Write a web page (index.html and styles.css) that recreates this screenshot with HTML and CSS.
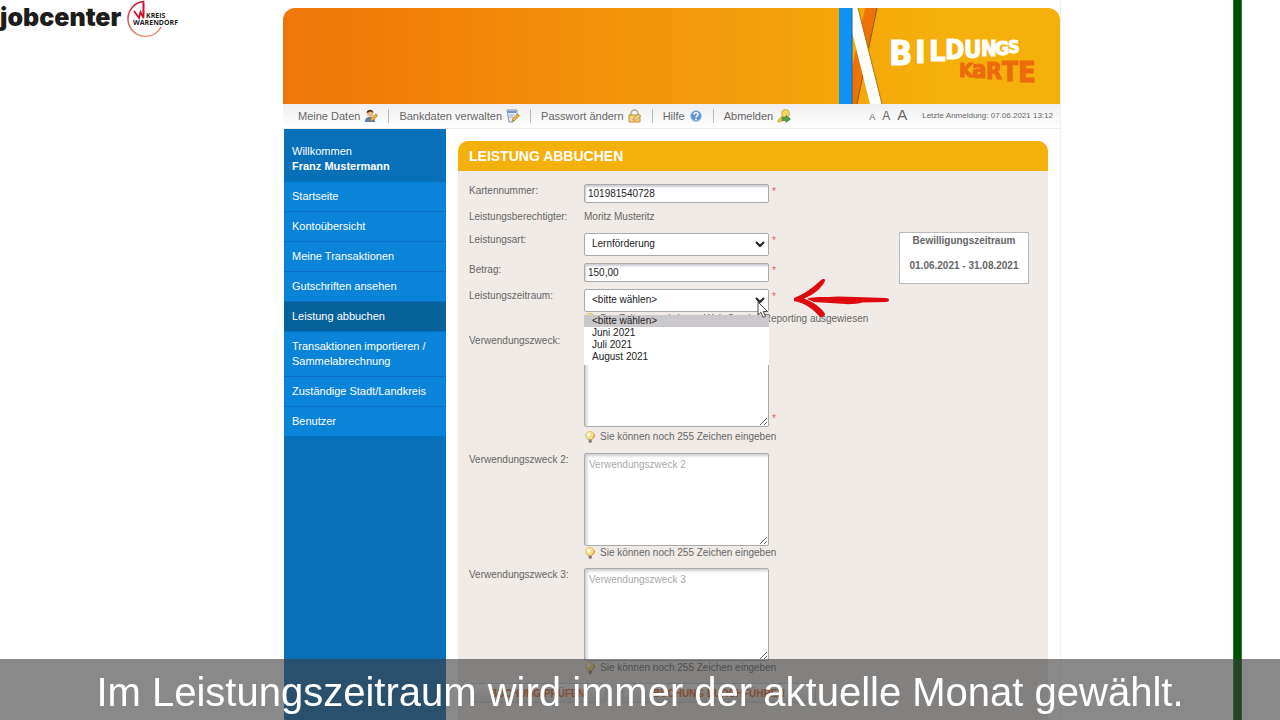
FILE: index.html
```html
<!DOCTYPE html>
<html lang="de">
<head>
  <meta charset="UTF-8">
  <meta name="viewport" content="width=device-width, initial-scale=1.0">
  <title>Leistung abbuchen</title>
  <link rel="stylesheet" href="styles.css">
</head>
<body>
  <!-- Shared icon -->
  <svg class="defs" width="0" height="0">
    <symbol id="bulb" viewBox="0 0 12 12">
      <circle cx="6" cy="4.6" r="4.3" fill="#f7dd86" stroke="#cfa84c" stroke-width=".6"/>
      <circle cx="4.8" cy="3.6" r="2" fill="#fffbe0"/>
      <path d="M4.5 8.6h3.4v2.2L6.8 11.9H5.5L4.5 10.8z" fill="#8d8577"/>
      <path d="M8.5 7.6l1.7-2.3.2-2" stroke="#c48a34" fill="none"/>
    </symbol>
  </svg>

  <div class="stage">
    <div class="brand">
      <svg width="184" height="40" viewBox="0 0 184 40">
        <defs>
          <linearGradient id="ring" x1="0" y1="0" x2="0" y2="1">
            <stop offset="0" stop-color="#c4102c"/>
            <stop offset="1" stop-color="#e39a80"/>
          </linearGradient>
        </defs>
        <text class="brand-name" x="0" y="26">jobcenter</text>
        <path d="M143.5 14V1.5A17.5 17.5 0 1 0 161 27" fill="none" stroke="url(#ring)" stroke-width="1.5"/>
        <path d="M134 11l5 7 1.5-6 3 6V3" fill="none" stroke="#d0102b" stroke-width="1.8"/>
        <text class="brand-sub" x="146" y="18">KREIS</text>
        <text class="brand-sub" x="133" y="25">WARENDORF</text>
      </svg>
    </div>

    <div class="portal">
      <header class="banner">
        <svg width="221" height="96" viewBox="0 0 221 96">
          <path d="M0 0h13v96H0z" fill="#0d92f5"/>
          <path d="M26 0h12L18 96H13V60z" fill="#ee7205"/>
          <path d="M38 0L18 96" stroke="#8a5a10" fill="none"/>
          <path d="M13 0h6l24 96H31L13 24z" fill="#fff"/>
          <path d="M19 0l24 96" stroke="#a87512" fill="none"/>
          <path d="M13 0v96" stroke="#27658c" fill="none"/>
          <text class="logo-top"><tspan x="50" y="57" font-size="34">B</tspan><tspan x="76" y="55" font-size="32">I</tspan><tspan x="90" y="53" font-size="29">L</tspan><tspan x="106" y="51" font-size="26">D</tspan><tspan x="125" y="50" font-size="24">U</tspan><tspan x="142" y="48" font-size="21">N</tspan><tspan x="156" y="47" font-size="19">G</tspan><tspan x="169" y="45" font-size="18">S</tspan></text>
          <text class="logo-bottom"><tspan x="120" y="69" font-size="20">K</tspan><tspan x="133" y="70" font-size="24">a</tspan><tspan x="147" y="71" font-size="23">R</tspan><tspan x="163" y="73" font-size="26">T</tspan><tspan x="179" y="74" font-size="29">E</tspan></text>
        </svg>
      </header>

      <nav class="topnav">
        <a href="#">Meine Daten
          <svg width="14" height="14" viewBox="0 0 14 14"><path d="M1 13c0-4 2-5 5-5s5 2 5 5z" fill="#5d7fa8"/><circle cx="6" cy="4.5" r="3.2" fill="#e9b77b"/><path d="M2.5 4C3 0 9-.5 9.5 4L7 2.5z" fill="#5b3213"/><path d="M6 12l1-3 5-4 1.5 2-5 4.5z" fill="#f0b73c" stroke="#9a6a1c" stroke-width=".6"/></svg>
        </a>
        <a href="#">Bankdaten verwalten
          <svg width="14" height="14" viewBox="0 0 14 14"><path d="M1 1h10v7l-4 5H3z" fill="#e8eef7" stroke="#7e91ad"/><path d="M2 2h8v2H2z" fill="#6a95d0"/><path d="M3 6h5M3 8h4" stroke="#9fb0c6"/><path d="M6 12l1-3 5-4 1.5 2-5 4.5z" fill="#f0b73c" stroke="#9a6a1c" stroke-width=".6"/></svg>
        </a>
        <a href="#">Passwort ändern
          <svg width="14" height="14" viewBox="0 0 14 14"><path d="M3 7V4.5a3.5 3.5 0 0 1 7 0V7" fill="none" stroke="#b1a68f" stroke-width="1.5"/><path d="M1 6h11v7H1z" fill="#f5d37a" stroke="#bf9035"/><path d="M5 11l1-2 5-4 1.5 2-5 4z" fill="#f8e0a0" stroke="#9a6a1c" stroke-width=".6"/></svg>
        </a>
        <a href="#">Hilfe
          <svg width="14" height="14" viewBox="0 0 14 14"><circle cx="7" cy="7" r="5.5" fill="#5f93cf" stroke="#b9cde4"/><path d="M5 5.5c0-2.500 4-2.500 4 0C9 7 7 7 7 8.500" fill="none" stroke="#fff" stroke-width="1.5"/><circle cx="7" cy="10.5" r=".9" fill="#fff"/></svg>
        </a>
        <a href="#">Abmelden
          <svg width="14" height="14" viewBox="0 0 14 14"><circle cx="8.5" cy="4.5" r="4" fill="#f2d667" stroke="#bf9c36" stroke-width=".7"/><path d="M5.5 6.5L1 11v2h3l3-4z" fill="#edc850" stroke="#bf9c36" stroke-width=".6"/><path d="M5 8.5h4V6.500l4.500 3.500L9 13.500v-2H5z" fill="#55a63a" stroke="#2f6d22" stroke-width=".6"/></svg>
        </a>
        <div class="sizes"><a class="size-s" href="#">A</a><a class="size-m" href="#">A</a><a class="size-l" href="#">A</a></div>
        <span class="last-login">Letzte Anmeldung: 07.06.2021 13:12</span>
      </nav>

      <div class="columns">
        <aside class="sidebar">
          <p class="welcome">Willkommen<br><strong>Franz Mustermann</strong></p>
          <ul class="menu">
            <li><a href="#">Startseite</a></li>
            <li><a href="#">Kontoübersicht</a></li>
            <li><a href="#">Meine Transaktionen</a></li>
            <li><a href="#">Gutschriften ansehen</a></li>
            <li><a class="active" href="#">Leistung abbuchen</a></li>
            <li><a href="#">Transaktionen importieren / Sammelabrechnung</a></li>
            <li><a href="#">Zuständige Stadt/Landkreis</a></li>
            <li><a href="#">Benutzer</a></li>
          </ul>
        </aside>

        <main class="panel">
          <h1>LEISTUNG ABBUCHEN</h1>
          <div class="panel-body">
            <form>
              <div class="row">
                <label for="karte">Kartennummer:</label>
                <div class="field"><input type="text" id="karte" value="101981540728"><span class="req">*</span></div>
              </div>
              <div class="row plain">
                <span class="label">Leistungsberechtigter:</span>
                <div>Moritz Musteritz</div>
              </div>
              <div class="row">
                <label for="art">Leistungsart:</label>
                <div class="field"><select id="art"><option>Lernförderung</option></select><span class="req">*</span></div>
              </div>
              <div class="row">
                <label for="betrag">Betrag:</label>
                <div class="field"><input type="text" id="betrag" value="150,00"><span class="req">*</span></div>
              </div>
              <div class="row hinted">
                <label for="zeitraum">Leistungszeitraum:</label>
                <div class="field open">
                  <select id="zeitraum">
                    <option>&lt;bitte wählen&gt;</option>
                    <option>Juni 2021</option>
                    <option>Juli 2021</option>
                    <option>August 2021</option>
                  </select><span class="req">*</span>
                  <p class="hint"><svg width="12" height="12"><use href="#bulb"/></svg>Der Zeitraum wird vom Web-Service Reporting ausgewiesen</p>
                  <ul class="options">
                    <li class="current">&lt;bitte wählen&gt;</li>
                    <li>Juni 2021</li>
                    <li>Juli 2021</li>
                    <li>August 2021</li>
                  </ul>
                  <svg class="cursor" width="12" height="18" viewBox="0 0 12 18"><path d="M1 1v13l3-2.6 2.2 5 2.3-1-2.2-4.8H10.5z" fill="#fff" stroke="#444"/></svg>
                  <svg class="arrow" width="98" height="42" viewBox="0 0 98 42"><path d="M1 20C12 16 20 9 27 3c3-3 6-2 5 0-4 8-12 14-21 17.500C20 24 29 30 32 36c0 3-4 4-6 2C20 31 12 25 1 23z" fill="#dd0a10"/><path d="M14 21c4-2 12-2 22-2l9-.5 18 .5 30 1c4 0 4 4 0 4l-24 .5c-5 2-18 2-24 1l-24-1.500z" fill="#dd0a10"/></svg>
                </div>
              </div>
              <div class="row hinted">
                <label for="zweck1">Verwendungszweck:</label>
                <div class="field required-area"><textarea id="zweck1"></textarea><span class="req">*</span>
                  <p class="hint"><svg width="12" height="12"><use href="#bulb"/></svg>Sie können noch 255 Zeichen eingeben</p>
                </div>
              </div>
              <div class="row hinted">
                <label for="zweck2">Verwendungszweck 2:</label>
                <div class="field"><textarea id="zweck2" placeholder="Verwendungszweck 2"></textarea>
                  <p class="hint"><svg width="12" height="12"><use href="#bulb"/></svg>Sie können noch 255 Zeichen eingeben</p>
                </div>
              </div>
              <div class="row hinted">
                <label for="zweck3">Verwendungszweck 3:</label>
                <div class="field"><textarea id="zweck3" placeholder="Verwendungszweck 3"></textarea>
                  <p class="hint"><svg width="12" height="12"><use href="#bulb"/></svg>Sie können noch 255 Zeichen eingeben</p>
                </div>
              </div>
              <div class="actions">
                <button type="button">BUCHUNG PRÜFEN</button>
                <button type="button" class="wide">BUCHUNG DURCHFÜHREN</button>
              </div>
            </form>
            <div class="period">
              <p>Bewilligungszeitraum</p>
              <p>01.06.2021 - 31.08.2021</p>
            </div>
          </div>
        </main>
      </div>
    </div>

    <div class="stripe"></div>
  </div>

  <div class="caption">Im Leistungszeitraum wird immer der aktuelle Monat gewählt.</div>
</body>
</html>
```
FILE: styles.css
```css
* {
  box-sizing: border-box;
}

body {
  margin: 0;
  font-family: "Liberation Sans", Arial, sans-serif;
  font-size: 11px;
  line-height: 16px;
  color: #666;
  background: #fff;
}

a {
  color: inherit;
  text-decoration: none;
}

p, ul, h1 {
  margin: 0;
  padding: 0;
}

ul {
  list-style: none;
}

.defs {
  position: absolute;
}

.stage {
  display: grid;
  grid-template-columns: 283px minmax(0, 1fr) 172px 9px;
  padding-right: 38px;
  height: 100vh;
  overflow: hidden;
}

.brand-name {
  font: 900 25px Inter, sans-serif;
  fill: #1d1d1b;
}

.brand-sub {
  font: 700 7px "Open Sans", sans-serif;
  fill: #1d1d1b;
}

.stripe {
  grid-column: 4;
  background: #004f00;
  border: solid #2e7d32;
  border-width: 0 1px;
}

.portal {
  display: flex;
  flex-direction: column;
  padding-top: 8px;
  border-right: 1px solid #f3f1ef;
}

.banner {
  display: flex;
  justify-content: flex-end;
  height: 96px;
  border-radius: 12px 12px 0 0;
  background: linear-gradient(90deg, #ef7508, #f5b00b 85%);
  overflow: hidden;
}

.logo-top,
.logo-bottom {
  font-family: "DejaVu Sans Condensed", "DejaVu Sans", sans-serif;
  font-weight: bold;
  fill: #fff;
  stroke: #fff;
}

.logo-bottom {
  fill: #ec6a0c;
  stroke: #ec6a0c;
}

/* Top navigation */
.topnav {
  display: flex;
  align-items: center;
  height: 25px;
  padding: 0 7px 1px 5px;
  border-bottom: 1px solid #efedeb;
  background: linear-gradient(#f0eeee, #fff);
}

.topnav > a {
  display: flex;
  align-items: center;
  gap: 4px;
  padding: 0 10px;
  line-height: 14px;
}

.topnav > a + a {
  border-left: 1px solid #bbb;
}

.sizes {
  display: flex;
  align-items: baseline;
  gap: 7px;
  margin-left: auto;
}

.size-s {
  font-size: 9px;
}

.size-m {
  font-size: 12px;
}

.size-l {
  font-size: 15px;
}

.last-login {
  margin-left: 15px;
  font-size: 8px;
}

.columns {
  display: flex;
  flex: 1;
  align-items: stretch;
}

/* Sidebar */
.sidebar {
  width: 162px;
  margin-left: 1px;
  background: #0870b8;
  color: #fff;
  line-height: 15px;
}

.welcome {
  padding: 15px 8px 8px;
}

.menu a {
  display: block;
  padding: 7px 8px;
  border-bottom: 1px solid #0870c4;
  background: #0a84d9;
}

.menu a.active {
  background: #07629b;
}

/* Form panel */
.panel {
  flex: 1;
  margin: 12px 12px 0;
  border-radius: 10px 10px 0 0;
  background: #f0ebe6;
  font-size: 10px;
  overflow: hidden;
}

.panel h1 {
  padding: 0 11px;
  background: #f4b10c;
  color: #fff;
  font-size: 14px;
  line-height: 30px;
}

.panel-body {
  display: flex;
  align-items: flex-start;
  justify-content: space-between;
  padding: 12px 19px 20px 11px;
}

.row {
  display: flex;
  margin-bottom: 6px;
}

.row.plain,
.row.hinted {
  margin-bottom: 7px;
}

.row label,
.row .label {
  width: 115px;
}

.field {
  position: relative;
  padding-top: 1px;
}

.field.open {
  z-index: 2;
}

input,
select,
textarea {
  display: inline-block;
  width: 185px;
  margin: 0;
  border: 1px solid #aaa;
  border-radius: 2px;
  background: #fff;
  color: #222;
  font: inherit;
  vertical-align: top;
}

input {
  height: 19px;
  padding: 0 3px 1px;
  box-shadow: inset 1px 2px 2px #ccccd4;
}

select {
  height: 23px;
  padding: 0 3px 2px;
}

textarea {
  height: 93px;
  padding: 3px 4px;
  box-shadow: inset 2px 2px 3px #ccccd4;
}

textarea::placeholder {
  color: #aaa;
}

.req {
  margin-left: 3px;
  color: #e2604c;
}

.hint {
  display: flex;
  align-items: center;
  gap: 4px;
  height: 14px;
  white-space: nowrap;
}

.required-area {
  display: grid;
  grid-template-columns: 185px auto;
  align-items: end;
}

.required-area .hint {
  grid-column: 1 / 3;
  margin: 3px 0 1px;
}

.hint svg {
  flex: none;
}

.options {
  position: absolute;
  top: 27px;
  left: 0;
  width: 185px;
  padding-bottom: 2px;
  background: #fff;
  color: #222;
  line-height: 12px;
}

.options li {
  padding: 0 8px;
}

.options .current {
  background: #cac8ca;
}

.cursor {
  position: absolute;
  top: 13px;
  left: 173px;
}

.arrow {
  position: absolute;
  top: -10px;
  left: 209px;
}

.period {
  flex: none;
  width: 130px;
  height: 52px;
  margin-top: 49px;
  border: 1px solid #bbb;
  background: #fff;
  font-weight: bold;
  text-align: center;
}

.period p + p {
  margin-top: 9px;
}

.actions {
  display: flex;
  gap: 16px;
  padding-top: 1px;
}

.actions button {
  height: 20px;
  padding: 0 20px;
  border: 1px solid #ccc;
  border-radius: 3px;
  background: linear-gradient(#fff, #ddd);
  color: #e8650f;
  font: bold 10px "Liberation Sans", Arial, sans-serif;
}

.actions .wide {
  padding: 0 30px;
}

/* Subtitle bar */
.caption {
  position: fixed;
  right: 0;
  bottom: 0;
  left: 0;
  z-index: 3;
  height: 61px;
  background: rgba(62, 62, 62, 0.61);
  color: #fff;
  font-size: 40px;
  line-height: 66px;
  text-align: center;
}
```
